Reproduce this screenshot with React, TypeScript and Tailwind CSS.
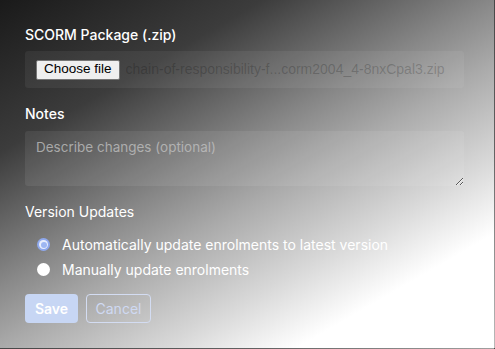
import { useState } from 'react'

const font = { fontFamily: 'Inter, "Noto Sans", sans-serif' }
const native = { fontFamily: '"Liberation Sans", Arial, sans-serif' }

function Radio({ checked, label, onClick }: { checked: boolean; label: string; onClick: () => void }) {
  return (
    <button type="button" onClick={onClick} className="flex h-[25px] items-center text-left">
      <span className="flex w-[37px] justify-center">
        {checked ? (
          <span className="flex h-[13px] w-[13px] items-center justify-center rounded-full bg-[#8fa9ee]">
            <span className="flex h-[9px] w-[9px] items-center justify-center rounded-full bg-[#e8eefc]">
              <span className="h-[6px] w-[6px] rounded-full bg-[#9db6f2]" />
            </span>
          </span>
        ) : (
          <span className="h-[13px] w-[13px] rounded-full bg-white" />
        )}
      </span>
      <span className="text-[14px] text-white">{label}</span>
    </button>
  )
}

export default function App() {
  const [mode, setMode] = useState<'auto' | 'manual'>('auto')

  return (
    <div
      style={font}
      className="h-[349px] w-[495px] overflow-hidden border-r border-b border-white/20 bg-[linear-gradient(150deg,#1a1a1a_0%,#3c3c3c_24%,#888888_45%,#aaaaaa_55%,#d8d8d8_70%,#ffffff_82%)] px-[25px] pt-[25px]"
    >
      <label className="block text-[14px] font-medium leading-5 text-white">SCORM Package (.zip)</label>
      <div className="mt-[6px] flex h-[37px] w-[439px] items-center rounded-[3px] bg-white/[0.06] pl-[11px]">
        <span
          style={native}
          className="flex h-[20px] items-center rounded-[2px] border border-[#767676] bg-[#efefef] px-[7px] text-[13.5px] text-black"
        >
          Choose file
        </span>
        <span style={native} className="ml-[6px] truncate text-[14px] text-black/20">
          chain-of-responsibility-f...corm2004_4-8nxCpal3.zip
        </span>
      </div>

      <label className="mt-[16px] block text-[14px] font-medium leading-5 text-white">Notes</label>
      <textarea
        placeholder="Describe changes (optional)"
        className="mt-[7px] block h-[55px] w-[439px] resize-y rounded-[3px] bg-white/[0.07] px-[11px] py-[6px] text-[13.5px] text-white outline-none placeholder:text-[#c4c4c4]/75"
      />

      <div className="mt-[16px] text-[14px] leading-5 text-white">Version Updates</div>
      <div className="mt-[10px] flex flex-col">
        <Radio checked={mode === 'auto'} label="Automatically update enrolments to latest version" onClick={() => setMode('auto')} />
        <Radio checked={mode === 'manual'} label="Manually update enrolments" onClick={() => setMode('manual')} />
      </div>

      <div className="mt-[12px] flex gap-2">
        <button type="button" className="h-[29px] w-[53px] rounded-[4px] bg-[#c7d6f4] text-[14px] font-semibold text-white">
          Save
        </button>
        <button
          type="button"
          className="h-[29px] w-[65px] rounded-[4px] border border-[#d3dcf2] text-[14px] text-[#cfd9f2]"
        >
          Cancel
        </button>
      </div>
    </div>
  )
}
